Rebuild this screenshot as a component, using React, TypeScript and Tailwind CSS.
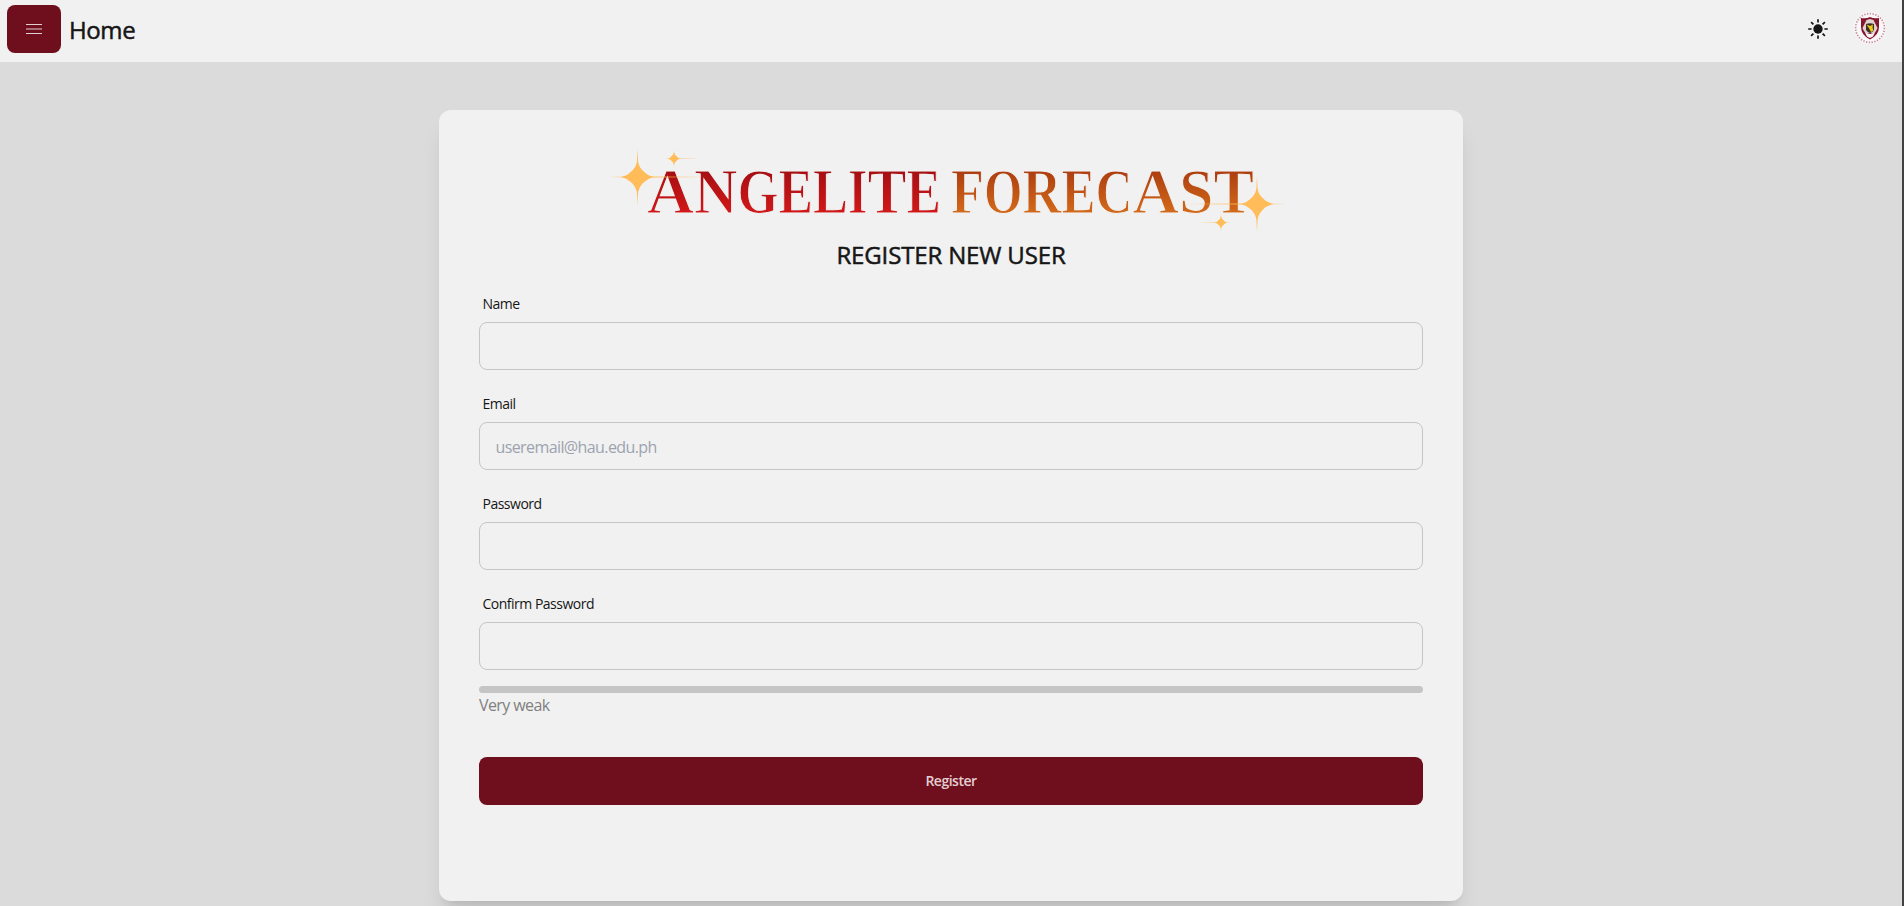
import React from "react";

type SparkleProps = { x: number; y: number; body: number; ray: number; left: number; right: number };

function Sparkle({ x, y, body: b, ray, left, right }: SparkleProps) {
  const c = b * 0.24;
  const w = b * 0.09;
  return (
    <g transform={`translate(${x} ${y})`}>
      <path d={`M0 ${-b * 1.15}Q${c} ${-c} ${b * 1.15} 0Q${c} ${c} 0 ${b * 1.15}Q${-c} ${c} ${-b * 1.15} 0Q${-c} ${-c} 0 ${-b * 1.15}Z`} />
      <circle r={b * 0.58} />
      <path d={`M0 ${-ray}L${w} 0L0 ${ray}L${-w} 0Z`} />
      <path d={`M${-left} 0L0 ${-w * 0.8}L${right} 0L0 ${w * 0.8}Z`} opacity=".6" />
    </g>
  );
}

type Glyph = [letter: string, x: number, width: number];

const ANGELITE: Glyph[] = [
  ["A", 647, 47],
  ["N", 694, 43.5],
  ["G", 737.5, 41],
  ["E", 778.5, 34.5],
  ["L", 813, 35],
  ["I", 848, 19.5],
  ["T", 867.5, 39],
  ["E", 906.5, 34.5],
];

const FORECAST: Glyph[] = [
  ["F", 951, 33],
  ["O", 984, 38.5],
  ["R", 1022.5, 39],
  ["E", 1061.5, 34],
  ["C", 1095.5, 37],
  ["A", 1132.5, 46.5],
  ["S", 1179, 34.5],
  ["T", 1213.5, 40.5],
];

function Word({ glyphs, fill }: { glyphs: Glyph[]; fill: string }) {
  return (
    <text y="212.5" fill={fill}>
      {glyphs.map(([letter, x, width], i) => (
        <tspan key={i} x={x} textLength={width} lengthAdjust="spacingAndGlyphs">
          {letter}
        </tspan>
      ))}
    </text>
  );
}

function Logo() {
  return (
    <svg viewBox="600 150 702 88" width="702" height="88" className="mx-auto block overflow-visible" aria-label="Angelite Forecast">
      <defs>
        <linearGradient id="red" gradientUnits="userSpaceOnUse" x1="0" y1="170" x2="0" y2="213">
          <stop offset="0" stopColor="#a50e12" />
          <stop offset="1" stopColor="#d11819" />
        </linearGradient>
        <linearGradient id="orange" gradientUnits="userSpaceOnUse" x1="0" y1="170" x2="0" y2="213">
          <stop offset="0" stopColor="#ac3c10" />
          <stop offset="1" stopColor="#d36a1a" />
        </linearGradient>
      </defs>
      <g fontFamily="'Liberation Serif', serif" fontWeight="700" fontSize="63" stroke="#f1f1f1" strokeWidth="1.1">
        <Word glyphs={ANGELITE} fill="url(#red)" />
        <Word glyphs={FORECAST} fill="url(#orange)" />
      </g>
      <g fill="#ffbc58">
        <Sparkle x={637.5} y={177} body={14} ray={28} left={28} right={70} />
        <Sparkle x={674} y={158.5} body={5.5} ray={9} left={8} right={26} />
        <Sparkle x={1257} y={204} body={14} ray={28} left={71} right={29} />
        <Sparkle x={1221} y={222.5} body={5.500} ray={9} left={24} right={10} />
      </g>
    </svg>
  );
}

function Sun() {
  return (
    <svg viewBox="-12 -12 24 24" className="mt-0.5 size-6 fill-[#161616] stroke-[#161616]">
      <circle r="4.7" stroke="none" />
      <path
        strokeWidth="1.7"
        d="M0-6.4V-9.8M0 6.4V9.8M-6.4 0H-9.8M6.4 0H9.8M4.6-4.6L6.9-6.9M-4.6-4.6L-6.9-6.9M4.6 4.6L6.9 6.9M-4.6 4.6L-6.9 6.9"
      />
    </svg>
  );
}

function Crest() {
  return (
    <svg viewBox="0 0 32 32" className="size-8">
      <circle cx="16" cy="16" r="16" fill="#faf7f8" />
      <circle cx="16" cy="16" r="14.4" fill="none" stroke="#c48c9a" strokeWidth="1.7" strokeDasharray="1.3 1.5" />
      <path d="M7 6q5 1 9-1q4 2 9 1v9q0 8-9 12.500q-9-4.500-9-12.500z" fill="#86152e" />
      <path d="M12.500 8l-2 4-2 4q1 3 3 5l9 0q2-2 3-5l-2-4-2-4-3.500-1z" fill="#ddd2d3" />
      <path d="M12 12q4-1.500 8 0v6q-1.500 2.500-4 3q-2.500-.5-4-3z" fill="#3d3020" />
      <path d="M12.500 12.500l3.500 1.500 3-1.500-.5 3 1 3-2.500 1.500-1.500-3z" fill="#ecc91c" />
      <path d="M11 20.500l5 1.500 5-1.500-2 4-3 1.500-3-1.500z" fill="#f8f4f4" />
    </svg>
  );
}

type FieldProps = { label: string; type: string; placeholder?: string };

function Field({ label, type, placeholder }: FieldProps) {
  return (
    <label className="mb-4 flex flex-col">
      <span className="px-[3.5px] py-2 text-sm leading-5 tracking-[-0.5px]">{label}</span>
      <input
        type={type}
        placeholder={placeholder}
        className="h-12 rounded-lg border border-[#c5c5c5] bg-transparent px-[15.5px] pt-0.5 text-base tracking-[-0.6px] outline-none placeholder:text-[#9ca3af]"
      />
    </label>
  );
}

export default function App() {
  return (
    <div className="flex h-[906px] overflow-hidden bg-[#dbdbdb] font-['Open_Sans',sans-serif] text-[#161616]">
      <div className="min-w-0 flex-1">
        <header className="flex h-[62px] items-start justify-between bg-[#f1f1f1] pt-[5px] pr-4 pl-[7px]">
          <div className="flex items-center">
            <button className="flex h-12 w-[54px] items-center justify-center rounded-lg bg-[#6f0e1c]" aria-label="Menu">
              <svg viewBox="0 0 16 12" className="h-3 w-4" stroke="#e2cfd2" strokeWidth="1">
                <path d="M0 1.5H16M0 6H16M0 10.5H16" />
              </svg>
            </button>
            <h1 className="ml-2 pt-px text-2xl font-medium tracking-[-0.4px] [-webkit-text-stroke:0.5px_#161616]">Home</h1>
          </div>
          <div className="flex items-center gap-6 pt-[7px]">
            <Sun />
            <Crest />
          </div>
        </header>
        <main className="flex justify-center pt-12">
          <section className="h-[791px] w-[1024px] rounded-xl bg-[#f1f1f1] p-10 shadow-xl">
            <Logo />
            <h2 className="mb-3.5 text-center text-2xl leading-[34px] font-medium tracking-[-0.15px] [-webkit-text-stroke:0.5px_#161616]">
              REGISTER NEW USER
            </h2>
            <form>
              <Field label="Name" type="text" />
              <Field label="Email" type="email" placeholder="useremail@hau.edu.ph" />
              <Field label="Password" type="password" />
              <Field label="Confirm Password" type="password" />
              <div className="h-[7px] rounded bg-[#c5c5c5]" />
              <p className="text-base tracking-[-0.6px] text-[#808080]">Very weak</p>
              <button
                type="button"
                className="mt-10 h-12 w-full rounded-lg bg-[#6f0e1c] text-sm font-semibold tracking-[-0.5px] text-[#e2cfd2]"
              >
                Register
              </button>
            </form>
          </section>
        </main>
      </div>
      <div className="w-0.5 bg-[#424242]" />
    </div>
  );
}
